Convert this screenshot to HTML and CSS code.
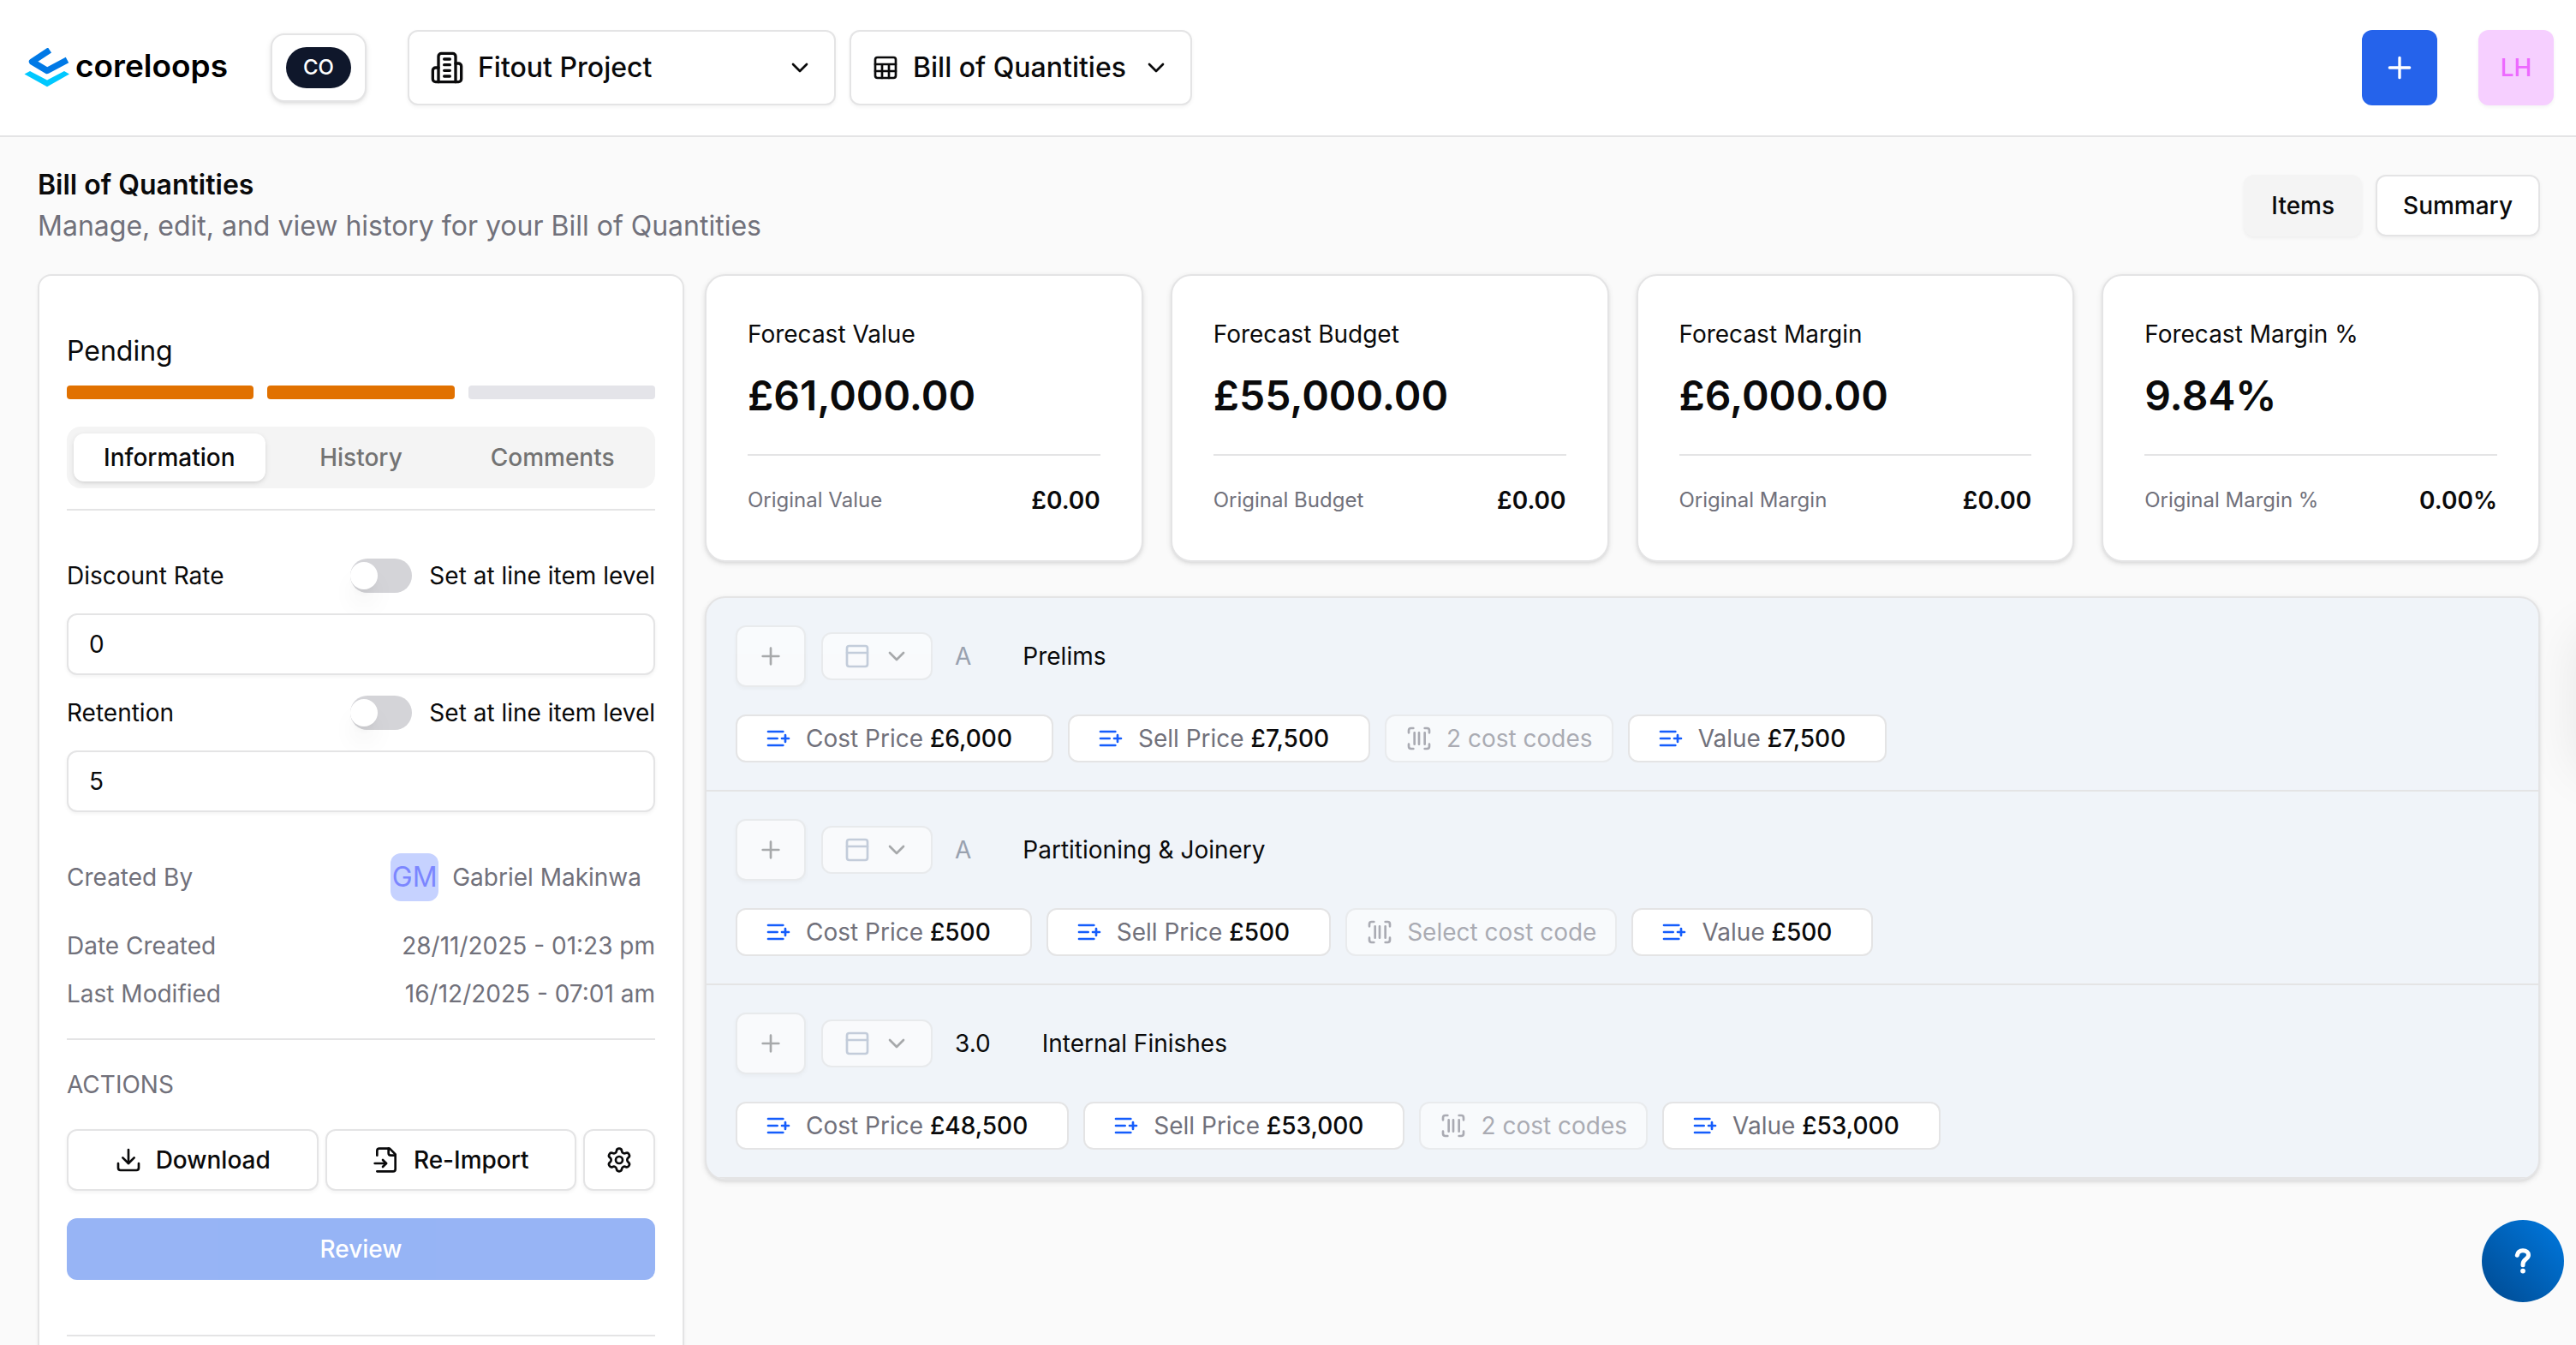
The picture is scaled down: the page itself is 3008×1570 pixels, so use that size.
FILE: index.html
```html
<!DOCTYPE html>
<html lang="en">
<head>
<meta charset="utf-8">
<meta name="viewport" content="width=device-width, initial-scale=1">
<title>Bill of Quantities</title>
<link rel="stylesheet" href="styles.css">
</head>
<body>
<svg class="sprite" aria-hidden="true">
  <symbol id="i-building" viewBox="0 0 24 24"><path d="M6 22V4a2 2 0 0 1 2-2h8a2 2 0 0 1 2 2v18Z"/><path d="M6 12H4a2 2 0 0 0-2 2v6a2 2 0 0 0 2 2h2"/><path d="M18 9h2a2 2 0 0 1 2 2v9a2 2 0 0 1-2 2h-2"/><path d="M10 6h4M10 10h4M10 14h4M10 18h4"/></symbol>
  <symbol id="i-sheet" viewBox="0 0 24 24"><rect x="3" y="3" width="18" height="18" rx="2"/><path d="M3 9h18M3 15h18M9 9v12M15 9v12"/></symbol>
  <symbol id="i-chevron" viewBox="0 0 24 24"><path d="m6 9 6 6 6-6"/></symbol>
  <symbol id="i-plus" viewBox="0 0 24 24"><path d="M5 12h14M12 5v14"/></symbol>
  <symbol id="i-download" viewBox="0 0 24 24"><path d="M21 15v4a2 2 0 0 1-2 2H5a2 2 0 0 1-2-2v-4"/><path d="m7 10 5 5 5-5"/><path d="M12 15V3"/></symbol>
  <symbol id="i-import" viewBox="0 0 24 24"><path d="M4 22h14a2 2 0 0 0 2-2V7l-5-5H6a2 2 0 0 0-2 2v4"/><path d="M14 2v4a2 2 0 0 0 2 2h4"/><path d="M2 15h10"/><path d="m9 18 3-3-3-3"/></symbol>
  <symbol id="i-gear" viewBox="0 0 24 24"><path d="M9.671 4.136a2.34 2.34 0 0 1 4.659 0 2.34 2.34 0 0 0 3.319 1.915 2.34 2.34 0 0 1 2.33 4.033 2.34 2.34 0 0 0 0 3.831 2.34 2.34 0 0 1-2.33 4.033 2.34 2.34 0 0 0-3.319 1.915 2.34 2.34 0 0 1-4.659 0 2.34 2.34 0 0 0-3.32-1.915 2.34 2.34 0 0 1-2.33-4.033 2.34 2.34 0 0 0 0-3.831A2.34 2.34 0 0 1 6.35 6.051a2.34 2.34 0 0 0 3.319-1.915"/><circle cx="12" cy="12" r="3"/></symbol>
  <symbol id="i-panel" viewBox="0 0 24 24"><rect x="3" y="3" width="18" height="18" rx="2"/><path d="M3 9h18"/></symbol>
  <symbol id="i-list-plus" viewBox="0 0 24 24"><path d="M11 12H3M16 6H3M16 18H3M18 9v6M21 12h-6"/></symbol>
  <symbol id="i-barcode" viewBox="0 0 24 24"><path d="M3 7V5a2 2 0 0 1 2-2h2M17 3h2a2 2 0 0 1 2 2v2M21 17v2a2 2 0 0 1-2 2h-2M7 21H5a2 2 0 0 1-2-2v-2M8 7v10M12 7v10M17 7v10"/></symbol>
</svg>

<header class="topbar">
  <a class="logo" href="#">
    <svg class="logo-mark" viewBox="28 56 54 46" aria-hidden="true">
      <path d="M58 58.500 37.500 72 55 82.500 78.500 70" fill="none" stroke="#0079e6" stroke-width="7.400" stroke-linejoin="round"/>
      <path d="M28.500 86.500 35 83l20 10.500L75 83l6 3.500L55 101.300Z" fill="#00c8ff"/>
    </svg>
    <span>coreloops</span>
  </a>
  <button class="org" type="button"><span>CO</span></button>
  <div class="pickers">
    <label class="picker picker-project">
      <svg class="icon icon-lg" aria-hidden="true"><use href="#i-building"/></svg>
      <select aria-label="Project"><option>Fitout Project</option></select>
      <svg class="icon" aria-hidden="true"><use href="#i-chevron"/></svg>
    </label>
    <label class="picker picker-module">
      <svg class="icon" aria-hidden="true"><use href="#i-sheet"/></svg>
      <select aria-label="Module"><option>Bill of Quantities</option></select>
      <svg class="icon" aria-hidden="true"><use href="#i-chevron"/></svg>
    </label>
  </div>
  <div class="account">
    <button class="add" type="button" aria-label="Add"><svg class="icon icon-lg" aria-hidden="true"><use href="#i-plus"/></svg></button>
    <button class="user" type="button">LH</button>
  </div>
</header>

<main class="page">
  <div class="page-head">
    <div>
      <h1>Bill of Quantities</h1>
      <p>Manage, edit, and view history for your Bill of Quantities</p>
    </div>
    <div class="views">
      <button class="btn btn-muted" type="button">Items</button>
      <button class="btn" type="button">Summary</button>
    </div>
  </div>

  <div class="columns">
    <aside class="panel">
      <h2 class="status">Pending</h2>
      <div class="steps"><span class="done"></span><span class="done"></span><span></span></div>
      <div class="tabs" role="tablist">
        <button type="button" role="tab" aria-selected="true">Information</button>
        <button type="button" role="tab" aria-selected="false">History</button>
        <button type="button" role="tab" aria-selected="false">Comments</button>
      </div>
      <hr>
      <div class="fields">
        <div class="field-head">
          <label for="discount">Discount Rate</label>
          <label class="switch"><input type="checkbox" role="switch">Set at line item level</label>
        </div>
        <input class="text" id="discount" type="text" value="0">
        <div class="field-head">
          <label for="retention">Retention</label>
          <label class="switch"><input type="checkbox" role="switch">Set at line item level</label>
        </div>
        <input class="text" id="retention" type="text" value="5">
      </div>
      <dl class="meta">
        <div class="creator"><dt>Created By</dt><dd><span class="avatar">GM</span>Gabriel Makinwa</dd></div>
        <div><dt>Date Created</dt><dd>28/11/2025 - 01:23 pm</dd></div>
        <div><dt>Last Modified</dt><dd>16/12/2025 - 07:01 am</dd></div>
      </dl>
      <hr>
      <h3 class="caption">ACTIONS</h3>
      <div class="actions">
        <button class="btn" type="button"><svg class="icon" aria-hidden="true"><use href="#i-download"/></svg>Download</button>
        <button class="btn" type="button"><svg class="icon" aria-hidden="true"><use href="#i-import"/></svg>Re-Import</button>
        <button class="btn btn-icon" type="button" aria-label="Settings"><svg class="icon" aria-hidden="true"><use href="#i-gear"/></svg></button>
      </div>
      <button class="review" type="button" disabled>Review</button>
      <hr>
    </aside>

    <div class="content">
      <section class="cards">
        <article class="card"><h2>Forecast Value</h2><p class="figure">£61,000.00</p><hr><div class="original"><span>Original Value</span><strong>£0.00</strong></div></article>
        <article class="card"><h2>Forecast Budget</h2><p class="figure">£55,000.00</p><hr><div class="original"><span>Original Budget</span><strong>£0.00</strong></div></article>
        <article class="card"><h2>Forecast Margin</h2><p class="figure">£6,000.00</p><hr><div class="original"><span>Original Margin</span><strong>£0.00</strong></div></article>
        <article class="card"><h2>Forecast Margin %</h2><p class="figure">9.84%</p><hr><div class="original"><span>Original Margin %</span><strong>0.00%</strong></div></article>
      </section>

      <ul class="bills">
        <li>
          <div class="bill-head">
            <button class="btn row-add" type="button" aria-label="Add item" disabled><svg class="icon" aria-hidden="true"><use href="#i-plus"/></svg></button>
            <button class="row-type" type="button" aria-label="Row type" aria-haspopup="menu" disabled><svg class="icon type-icon" aria-hidden="true"><use href="#i-panel"/></svg><svg class="icon" aria-hidden="true"><use href="#i-chevron"/></svg></button>
            <span class="ref placeholder">A</span>
            <span>Prelims</span>
          </div>
          <div class="chips">
            <button class="chip" type="button"><svg class="icon" aria-hidden="true"><use href="#i-list-plus"/></svg><span>Cost Price <b>£6,000</b></span></button>
            <button class="chip" type="button"><svg class="icon" aria-hidden="true"><use href="#i-list-plus"/></svg><span>Sell Price <b>£7,500</b></span></button>
            <button class="chip" type="button" disabled><svg class="icon" aria-hidden="true"><use href="#i-barcode"/></svg><span>2 cost codes</span></button>
            <button class="chip" type="button"><svg class="icon" aria-hidden="true"><use href="#i-list-plus"/></svg><span>Value <b>£7,500</b></span></button>
          </div>
        </li>
        <li>
          <div class="bill-head">
            <button class="btn row-add" type="button" aria-label="Add item" disabled><svg class="icon" aria-hidden="true"><use href="#i-plus"/></svg></button>
            <button class="row-type" type="button" aria-label="Row type" aria-haspopup="menu" disabled><svg class="icon type-icon" aria-hidden="true"><use href="#i-panel"/></svg><svg class="icon" aria-hidden="true"><use href="#i-chevron"/></svg></button>
            <span class="ref placeholder">A</span>
            <span>Partitioning &amp; Joinery</span>
          </div>
          <div class="chips">
            <button class="chip" type="button"><svg class="icon" aria-hidden="true"><use href="#i-list-plus"/></svg><span>Cost Price <b>£500</b></span></button>
            <button class="chip" type="button"><svg class="icon" aria-hidden="true"><use href="#i-list-plus"/></svg><span>Sell Price <b>£500</b></span></button>
            <button class="chip" type="button" disabled><svg class="icon" aria-hidden="true"><use href="#i-barcode"/></svg><span>Select cost code</span></button>
            <button class="chip" type="button"><svg class="icon" aria-hidden="true"><use href="#i-list-plus"/></svg><span>Value <b>£500</b></span></button>
          </div>
        </li>
        <li>
          <div class="bill-head">
            <button class="btn row-add" type="button" aria-label="Add item" disabled><svg class="icon" aria-hidden="true"><use href="#i-plus"/></svg></button>
            <button class="row-type" type="button" aria-label="Row type" aria-haspopup="menu" disabled><svg class="icon type-icon" aria-hidden="true"><use href="#i-panel"/></svg><svg class="icon" aria-hidden="true"><use href="#i-chevron"/></svg></button>
            <span class="ref">3.0</span>
            <span>Internal Finishes</span>
          </div>
          <div class="chips">
            <button class="chip" type="button"><svg class="icon" aria-hidden="true"><use href="#i-list-plus"/></svg><span>Cost Price <b>£48,500</b></span></button>
            <button class="chip" type="button"><svg class="icon" aria-hidden="true"><use href="#i-list-plus"/></svg><span>Sell Price <b>£53,000</b></span></button>
            <button class="chip" type="button" disabled><svg class="icon" aria-hidden="true"><use href="#i-barcode"/></svg><span>2 cost codes</span></button>
            <button class="chip" type="button"><svg class="icon" aria-hidden="true"><use href="#i-list-plus"/></svg><span>Value <b>£53,000</b></span></button>
          </div>
        </li>
      </ul>
    </div>
  </div>
</main>

<div class="drawer" aria-hidden="true"></div>
<button class="help" type="button" aria-label="Help">
  <svg viewBox="0 0 20 30" aria-hidden="true"><path d="M3.300 8.300C4 4.500 6.500 2.800 10 2.800c4 0 6.500 2 6.500 5.200 0 5-6.500 4.500-6.500 10.500v1.200" fill="none" stroke="#fff" stroke-width="5" stroke-linecap="round" stroke-linejoin="round"/><circle cx="10" cy="26.600" r="2.900" fill="#fff"/></svg>
</button>
</body>
</html>
```
FILE: styles.css
```css
:root {
  --ink: #0a0a0b;
  --muted: #71717b;
  --line: #e4e4e5;
  --blue: #2563eb;
  --shadow-xs: 0 2px 4px rgba(0, 0, 0, .05);
  --shadow-sm: 0 2px 6px rgba(0, 0, 0, .1), 0 2px 4px -2px rgba(0, 0, 0, .1);
}

* { box-sizing: border-box; }

body {
  margin: 0;
  height: 100vh;
  display: flex;
  flex-direction: column;
  overflow: hidden;
  background: #fafafa;
  color: var(--ink);
  font: 400 28px/40px Inter, "Liberation Sans", sans-serif;
}

h1, h2, h3, p, dl, dd, ul { margin: 0; padding: 0; font-weight: 400; font-size: inherit; }
ul { list-style: none; }
hr { width: 100%; height: 2px; margin: 0; border: 0; background: var(--line); }
button, input, select { font: inherit; color: inherit; }
button { cursor: pointer; padding: 0; border: 0; background: none; }

.sprite { display: none; }
.icon {
  width: 32px;
  height: 32px;
  flex: none;
  fill: none;
  stroke: currentColor;
  stroke-width: 2;
  stroke-linecap: round;
  stroke-linejoin: round;
}
.icon-lg { width: 40px; height: 40px; }

/* Top bar */
.topbar {
  display: flex;
  align-items: center;
  flex: none;
  height: 160px;
  padding: 0 26px 0 28px;
  background: #fff;
  border-bottom: 2px solid var(--line);
}
.logo {
  display: flex;
  align-items: center;
  gap: 6px;
  width: 288px;
  color: #000;
  font-size: 37px;
  font-weight: 600;
  text-decoration: none;
}
.logo span { padding-bottom: 4px; }
.logo-mark { width: 54px; height: 46px; flex: none; }
.org {
  padding: 14px 16px;
  border: 2px solid var(--line);
  border-radius: 16px;
  background: #fff;
  box-shadow: var(--shadow-sm);
}
.org span {
  display: block;
  width: 76px;
  border-radius: 24px;
  background: #0f172b;
  color: #fff;
  font-size: 24px;
  font-weight: 500;
  line-height: 48px;
}
.pickers { display: flex; gap: 16px; margin-left: 48px; }
.picker {
  display: flex;
  align-items: center;
  gap: 16px;
  height: 88px;
  padding: 0 24px;
  border: 2px solid var(--line);
  border-radius: 12px;
  background: #fff;
  box-shadow: var(--shadow-xs);
  font-size: 32px;
  font-weight: 500;
}
.picker-project { width: 500px; }
.picker-module { width: 400px; }
.picker select { flex: 1; min-width: 0; padding: 0; border: 0; background: none; appearance: none; }
.account { display: flex; gap: 48px; margin-left: auto; }
.add, .user { display: grid; place-items: center; width: 88px; height: 88px; border-radius: 12px; }
.add { background: var(--blue); color: #fff; }
.user { background: #f6cfff; color: #ed6aff; font-weight: 500; box-shadow: var(--shadow-xs); }

/* Page */
.page { flex: 1; min-height: 0; padding: 32px 42px 0 44px; }
.page-head { display: flex; justify-content: space-between; align-items: flex-start; font-size: 32px; line-height: 48px; }
.page-head h1 { font-weight: 600; }
.page-head p { color: var(--muted); }
.views { display: flex; gap: 16px; padding-top: 12px; }

.btn {
  display: flex;
  align-items: center;
  justify-content: center;
  gap: 16px;
  height: 72px;
  padding: 0 30px;
  border: 2px solid var(--line);
  border-radius: 12px;
  background: #fff;
  box-shadow: var(--shadow-xs);
  font-size: 28px;
  font-weight: 500;
}
.btn-muted { border-color: #f4f4f4; background: #f4f4f4; }

.columns { display: grid; grid-template-columns: 755px 1fr; gap: 24px; margin-top: 32px; }

/* Side panel */
.panel {
  display: flex;
  flex-direction: column;
  padding: 64px 32px;
  border: 2px solid var(--line);
  border-radius: 16px;
  background: #fff;
  box-shadow: var(--shadow-xs);
}
.status { font-size: 32px; line-height: 48px; }
.steps { display: grid; grid-template-columns: repeat(3, 1fr); gap: 16px; margin: 16px 0 32px; }
.steps span { height: 16px; border-radius: 4px; background: #e4e4e9; }
.steps .done { background: #e17100; }
.tabs {
  display: grid;
  grid-template-columns: repeat(3, 1fr);
  margin-bottom: 24px;
  padding: 8px;
  border-radius: 16px;
  background: #f4f4f4;
}
.tabs button { height: 56px; border-radius: 12px; color: #737373; font-weight: 500; }
.tabs [aria-selected="true"] { background: #fff; color: var(--ink); box-shadow: var(--shadow-sm); }
.fields { display: grid; gap: 24px; margin: 56px 0 48px; }
.field-head { display: flex; justify-content: space-between; }
.switch { display: flex; align-items: center; gap: 20px; }
.switch input {
  width: 72px;
  height: 40px;
  margin: 0;
  padding: 4px 0;
  border-radius: 20px;
  background: #d4d4d8;
  appearance: none;
}
.switch input::before {
  content: "";
  display: block;
  width: 32px;
  height: 32px;
  border-radius: 50%;
  background: #fff;
  box-shadow: 0 20px 30px -6px rgba(0, 0, 0, .1), 0 8px 12px -8px rgba(0, 0, 0, .1);
}
.text {
  width: 100%;
  height: 72px;
  padding: 0 24px;
  border: 2px solid var(--line);
  border-radius: 12px;
  background: #fff;
  box-shadow: var(--shadow-xs);
}
.meta { display: grid; gap: 16px; margin-bottom: 32px; color: var(--muted); }
.meta div { display: flex; align-items: center; justify-content: space-between; }
.meta .creator { padding: 0 16px 16px 0; }
.meta dd { display: flex; align-items: center; gap: 16px; }
.avatar {
  width: 56px;
  border-radius: 12px;
  background: #c6d2ff;
  color: #7c86ff;
  font-size: 32px;
  line-height: 56px;
  text-align: center;
}
.caption { margin: 32px 0; color: var(--muted); }
.actions { display: grid; grid-template-columns: 1fr 1fr 84px; gap: 8px; }
.actions .btn { padding: 0; }
.review {
  height: 72px;
  margin: 32px 0 64px;
  border-radius: 12px;
  background: var(--blue);
  color: #fff;
  font-weight: 500;
  opacity: .48;
}

/* Summary cards */
.content { min-width: 0; }
.cards { display: grid; grid-template-columns: repeat(4, 1fr); gap: 32px; }
.card {
  padding: 48px 48px 50px;
  border: 2px solid var(--line);
  border-radius: 24px;
  background: #fff;
  box-shadow: var(--shadow-sm);
}
.figure { margin: 16px 0 32px; font-size: 48px; font-weight: 600; line-height: 72px; }
.original { display: flex; justify-content: space-between; margin-top: 32px; color: var(--muted); font-size: 24px; }
.original strong { color: var(--ink); font-size: 28px; font-weight: 600; }

/* Bill list */
.bills {
  margin-top: 40px;
  border: 2px solid var(--line);
  border-radius: 24px;
  background: #f0f4f9;
  box-shadow: var(--shadow-sm);
  overflow: hidden;
}
.bills li { padding: 32px 34px; border-bottom: 2px solid var(--line); }
.bill-head { display: flex; align-items: center; gap: 18px; margin-bottom: 32px; }
.row-add { width: 82px; padding: 0; }
.row-type {
  display: flex;
  align-items: center;
  justify-content: space-between;
  width: 130px;
  height: 56px;
  padding: 0 24px;
  border: 2px solid var(--line);
  border-radius: 12px;
  background: #fff;
}
.type-icon { color: #90a1b9; }
.row-add:disabled, .row-type:disabled { opacity: .6; }
.row-add .icon, .row-type .icon { opacity: .55; }
.row-type .type-icon { opacity: .8; }
.ref { margin: 0 42px 0 8px; }
.placeholder { color: #99a1af; }
.chips { display: flex; flex-wrap: wrap; gap: 17px; }
.chip {
  display: flex;
  align-items: center;
  gap: 16px;
  height: 56px;
  padding: 0 46px 0 32px;
  border: 2px solid var(--line);
  border-radius: 12px;
  background: #fff;
  color: var(--muted);
}
.chip .icon { color: #155dfc; }
.chip b { color: var(--ink); font-weight: 500; }
.chip:disabled { padding: 0 22px; opacity: .55; }
.chip:disabled .icon { color: inherit; }

/* Floating parts */
.drawer {
  position: fixed;
  top: 740px;
  right: -80px;
  width: 80px;
  height: 160px;
  box-shadow: 0 0 60px rgba(0, 0, 0, .08);
}
.help {
  position: fixed;
  right: 14px;
  bottom: 50px;
  display: grid;
  place-items: center;
  width: 96px;
  height: 96px;
  border-radius: 50%;
  background: linear-gradient(45deg, #00498f, #0079e0);
}
.help svg { width: 20px; height: 30px; }
```
